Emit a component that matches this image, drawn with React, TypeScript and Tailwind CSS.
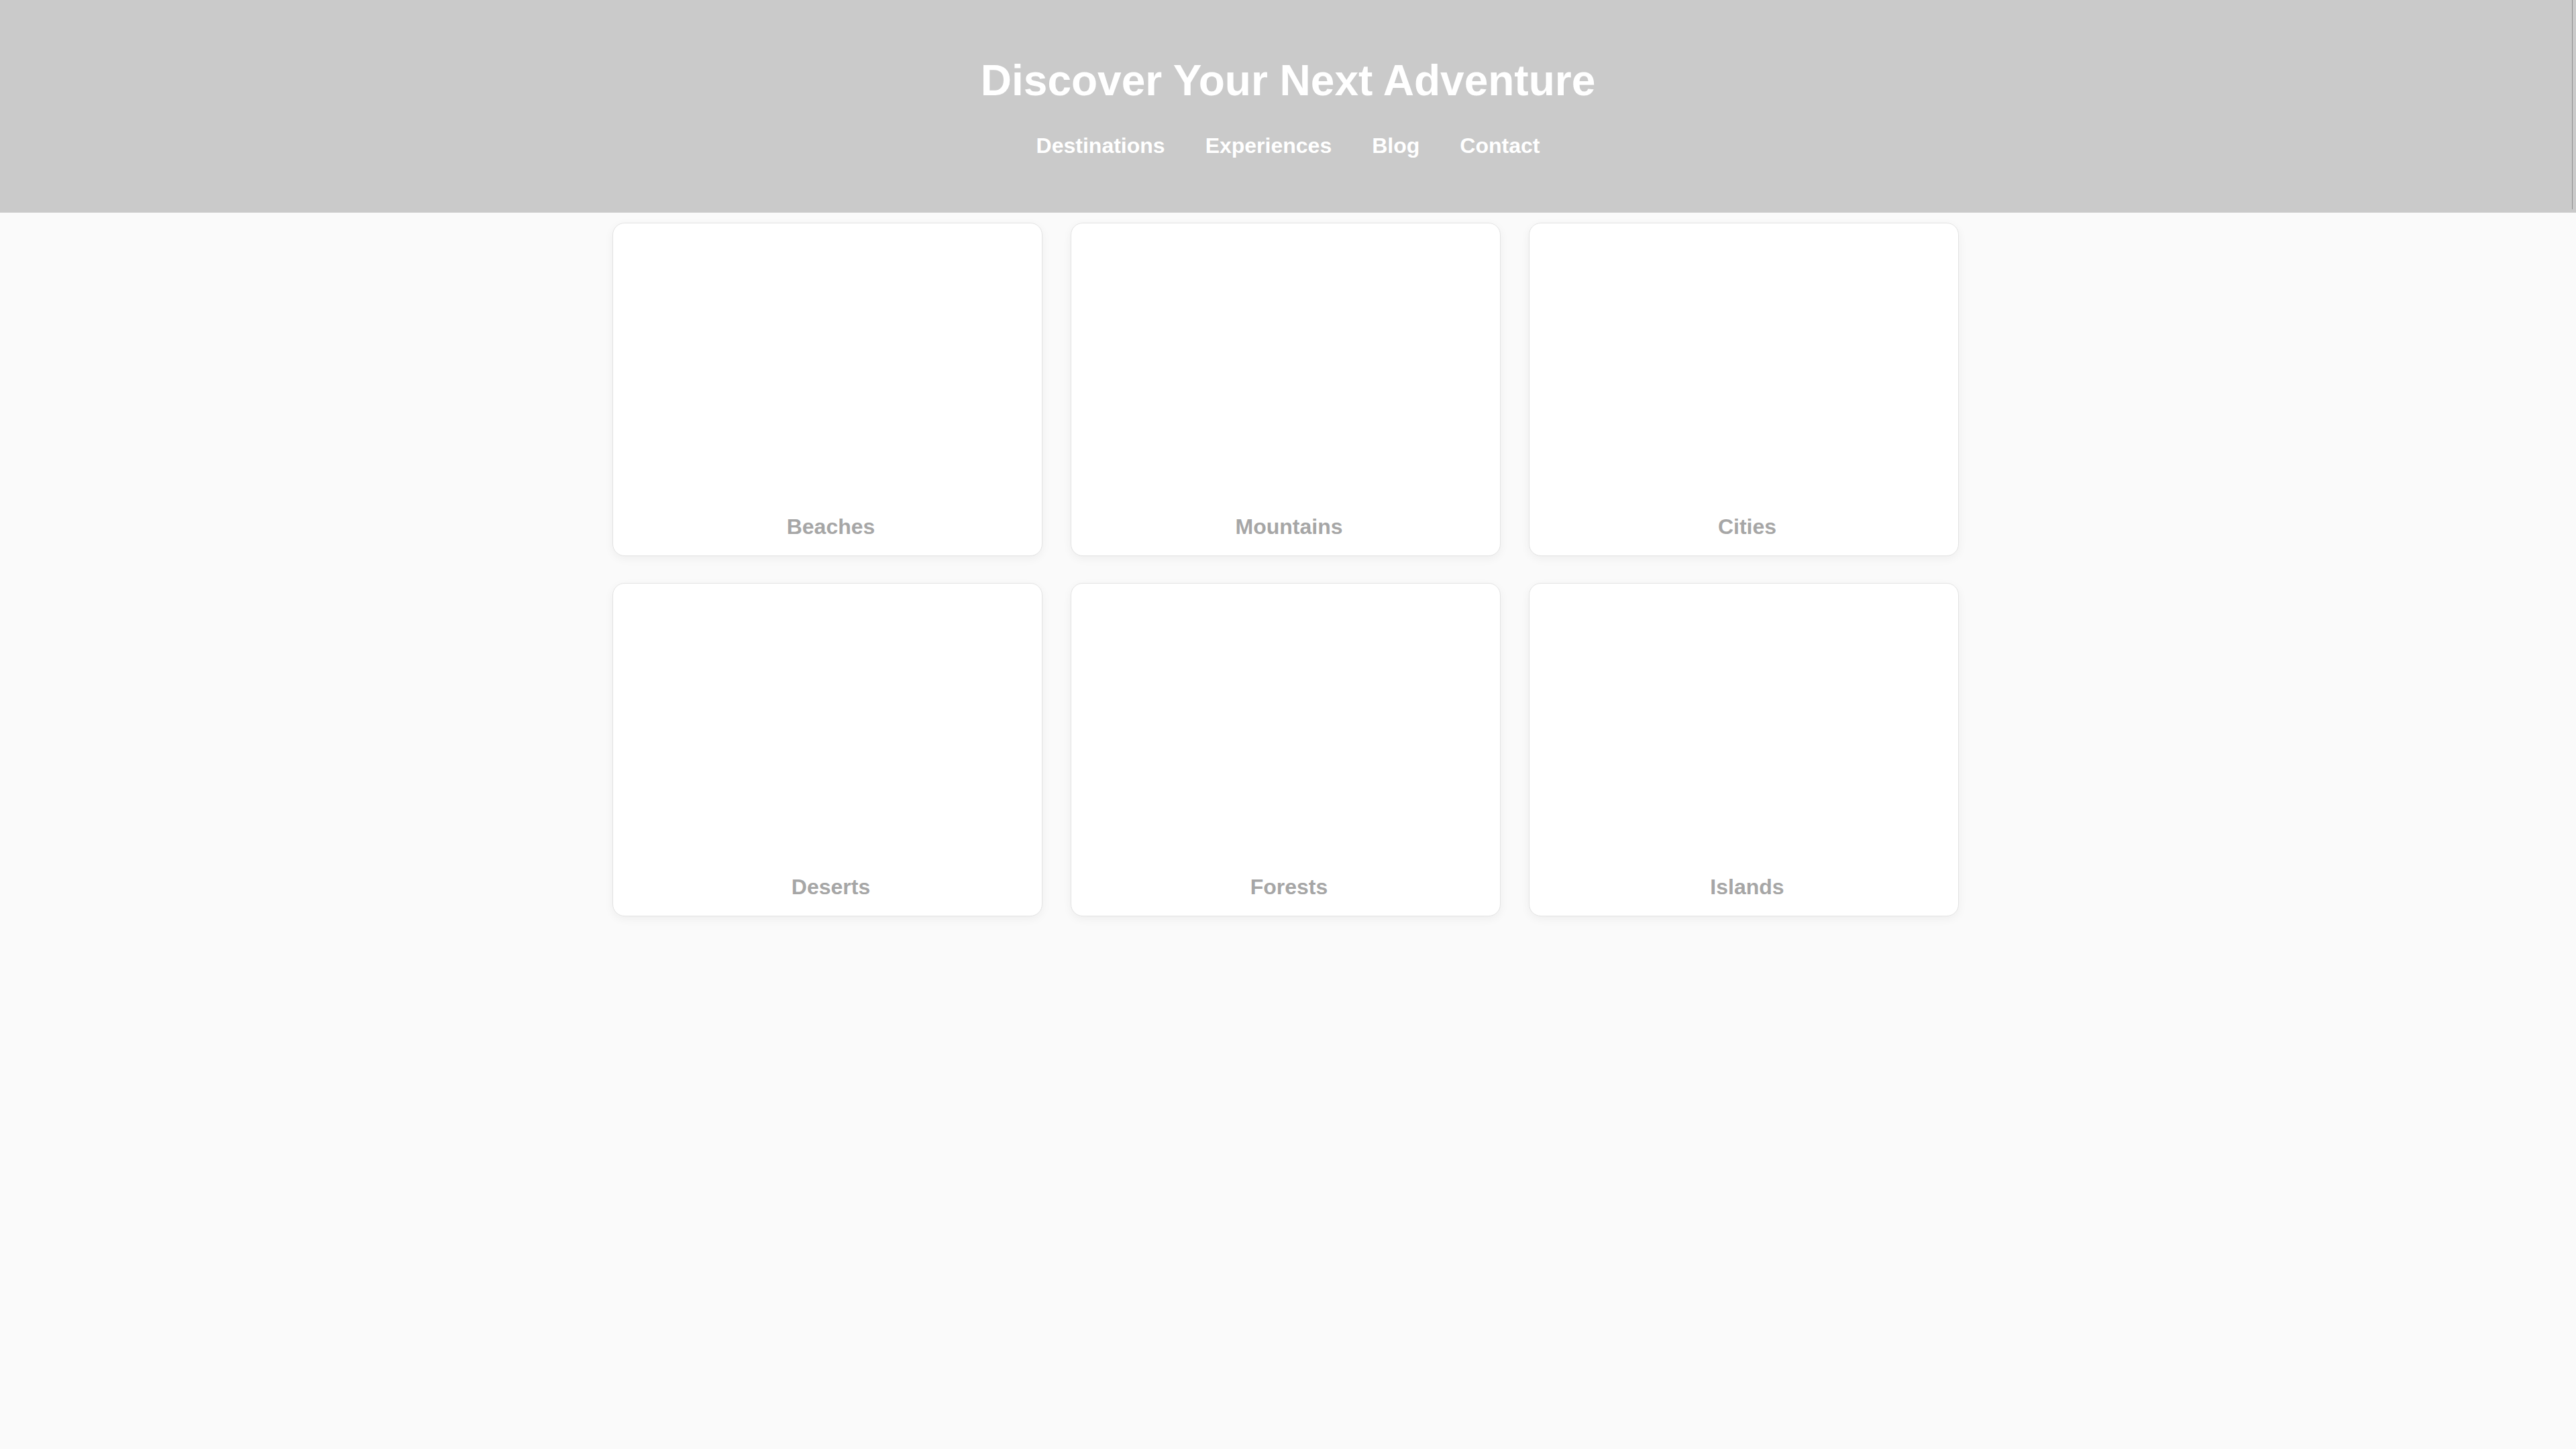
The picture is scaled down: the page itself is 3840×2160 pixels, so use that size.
const categories = ['Beaches', 'Mountains', 'Cities', 'Deserts', 'Forests', 'Islands'];

const navLinks = ['Destinations', 'Experiences', 'Blog', 'Contact'];

function CategoryCard({ name }: { name: string }) {
  return (
    <div className="flex h-[497px] flex-col justify-end rounded-[18px] border border-[#e3e3e3] bg-white shadow-[0_4px_14px_rgba(0,0,0,0.05)]">
      <p className="pb-[24px] pl-[10px] text-center text-[32px] leading-[37px] font-bold text-[#a6a6a6]">{name}</p>
    </div>
  );
}

export default function App() {
  return (
    <div className="min-h-screen bg-[#fafafa] font-['Liberation_Sans',Arial,sans-serif]">
      <header className="relative bg-[#cacaca] pt-[83px] pb-[81px] text-center text-white">
        <h1 className="text-[64px] leading-[74px] font-bold">Discover Your Next Adventure</h1>
        <nav className="mt-[42px] flex justify-center gap-[60px]">
          {navLinks.map((link) => (
            <a key={link} href="#" className="text-[32px] leading-[37px] font-bold text-white">
              {link}
            </a>
          ))}
        </nav>
        <div className="absolute top-0 right-[5px] h-[312px] w-[1px] bg-[#8e8e8e]" />
      </header>

      <main className="flex justify-center pt-[15px] pr-[7px]">
        <div className="grid w-[2007px] grid-cols-3 gap-x-[42px] gap-y-[40px]">
          {categories.map((c) => (
            <CategoryCard key={c} name={c} />
          ))}
        </div>
      </main>
    </div>
  );
}
